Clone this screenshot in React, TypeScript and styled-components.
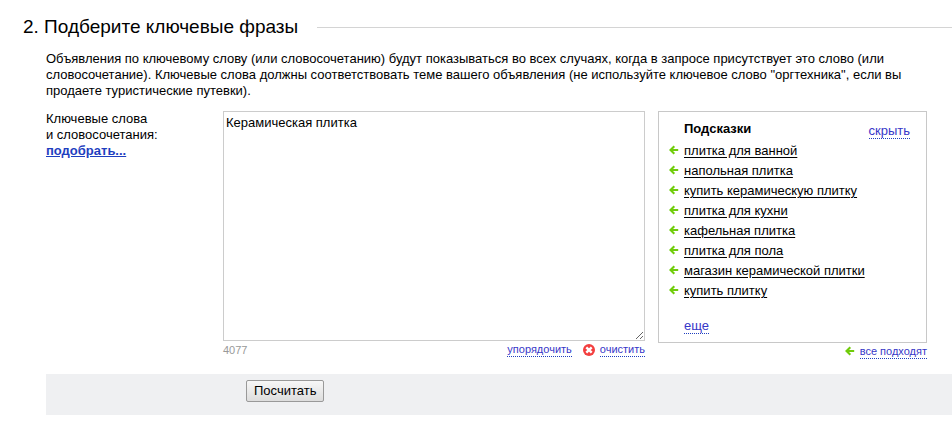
import React, { useState } from "react";
import styled, { createGlobalStyle } from "styled-components";

const GlobalStyle = createGlobalStyle`
  * {
    box-sizing: border-box;
  }
  body {
    margin: 0;
    background: #fff;
    color: #000;
    font: 13px/16px "Liberation Sans", Arial, sans-serif;
  }
`;

const Page = styled.main`
  padding: 16px 0 18px 23px;
`;

const Heading = styled.header`
  display: flex;
  align-items: center;
  gap: 19px;

  &::after {
    content: "";
    flex: 1;
    height: 1px;
    background: #d4d4d4;
  }
`;

const Title = styled.h1`
  margin: 0;
  font-size: 19px;
  line-height: 22px;
  font-weight: normal;
`;

const Section = styled.section`
  margin-left: 23px;
`;

const Intro = styled.p`
  margin: 13px 48px 0 0;
`;

const Form = styled.div`
  display: grid;
  grid-template-columns: 177px minmax(0, 1fr) 269px;
  align-items: start;
  margin: 12px 25px 0 0;
`;

const LabelColumn = styled.div`
  display: flex;
  flex-direction: column;
  align-items: flex-start;
`;

const PickLink = styled.a`
  color: #1f3fbf;
  font-weight: bold;
`;

const Editor = styled.div`
  margin-right: 13px;
`;

const Phrases = styled.textarea`
  display: block;
  width: 100%;
  height: 230px;
  margin: 0;
  padding: 3px 2px;
  border: 1px solid #ccc;
  border-radius: 0;
  outline: none;
  color: #000;
  font: inherit;
  resize: both;
`;

const Tools = styled.div`
  display: flex;
  align-items: flex-start;
  gap: 11px;
  padding-top: 2px;
  font-size: 11px;
  line-height: 13px;
`;

const Counter = styled.span`
  margin-right: auto;
  padding-top: 1px;
  color: #999;
`;

const DottedButton = styled.button<{ $small?: boolean }>`
  padding: 0;
  border: 0;
  border-bottom: 1px dotted #1f3fbf;
  background: none;
  color: #3737c8;
  font: inherit;
  font-size: ${(p) => (p.$small ? 11 : 13)}px;
  line-height: ${(p) => (p.$small ? 13 : 15)}px;
  cursor: pointer;
`;

const WithIcon = styled.span<{ $gap: number }>`
  display: flex;
  align-items: center;
  gap: ${(p) => p.$gap}px;
`;

const Panel = styled.aside`
  padding: 9px 16px 8px 10px;
  border: 1px solid #c8c8c8;
`;

const PanelHead = styled.div`
  display: flex;
  justify-content: space-between;
  align-items: flex-start;
  padding-left: 15px;
`;

const PanelTitle = styled.h2`
  margin: 0;
  font-size: 13px;
  line-height: 16px;
`;

const Hide = styled.div`
  display: flex;
  padding-top: 2px;
`;

const Hints = styled.ul`
  margin: 2px 0 0;
  padding: 0;
  list-style: none;
`;

const Hint = styled.li`
  display: flex;
  align-items: center;
  gap: 5px;
  height: 20px;
`;

const HintLink = styled.a`
  color: #000;
  line-height: 16px;
  text-underline-offset: 2px;
`;

const More = styled.div`
  display: flex;
  padding: 17px 0 0 15px;
`;

const PanelFoot = styled.div`
  display: flex;
  justify-content: flex-end;
  padding-top: 2px;
`;

const ActionBar = styled.footer`
  display: flex;
  margin-top: 15px;
  padding: 6px 0 13px 200px;
  background: #eff0f2;
`;

const Submit = styled.button`
  height: 22px;
  padding: 0 7px;
  border: 1px solid #999;
  border-radius: 2px;
  background: linear-gradient(#f7f7f7, #ddd);
  color: #000;
  font: inherit;
  cursor: pointer;
`;

const ArrowSvg = styled.svg`
  flex: none;
  width: 10px;
  height: 12px;
`;

const CrossSvg = styled.svg`
  flex: none;
  width: 12px;
  height: 12px;
`;

const Arrow = () => (
  <ArrowSvg viewBox="0 0 10 12" aria-hidden="true">
    <path d="M5.3 1.2 1.5 5 5.3 8.8M1.8 5H9.2" fill="none" stroke="#70cc0a" strokeWidth="2.1" />
  </ArrowSvg>
);

const Cross = () => (
  <CrossSvg viewBox="0 0 12 12" aria-hidden="true">
    <circle cx="6" cy="6" r="6" fill="#f33f3f" />
    <path d="M3.3 3.3 8.7 8.7M8.7 3.3 3.3 8.7" stroke="#fff" strokeWidth="2.4" />
  </CrossSvg>
);

const hints = [
  "плитка для ванной",
  "напольная плитка",
  "купить керамическую плитку",
  "плитка для кухни",
  "кафельная плитка",
  "плитка для пола",
  "магазин керамической плитки",
  "купить плитку",
];

const LIMIT = 4096;

export default function App() {
  const [text, setText] = useState("Керамическая плитка");

  const add = (phrases: string[]) =>
    setText((current) => [current, ...phrases].filter(Boolean).join("\n"));
  const sort = () => setText((current) => current.split("\n").sort().join("\n"));

  return (
    <>
      <GlobalStyle />
      <Page>
        <Heading>
          <Title>2. Подберите ключевые фразы</Title>
        </Heading>
        <Section>
          <Intro>
            Объявления по ключевому слову (или словосочетанию) будут показываться во всех
            случаях, когда в запросе присутствует это слово (или словосочетание). Ключевые
            слова должны соответствовать теме вашего объявления (не используйте ключевое
            слово "оргтехника", если вы продаете туристические путевки).
          </Intro>
          <Form>
            <LabelColumn>
              <label htmlFor="phrases">
                Ключевые слова
                <br />и словосочетания:
              </label>
              <PickLink href="#pick">подобрать...</PickLink>
            </LabelColumn>
            <Editor>
              <Phrases
                id="phrases"
                spellCheck={false}
                value={text}
                onChange={(e) => setText(e.target.value)}
              />
              <Tools>
                <Counter>{LIMIT - text.length}</Counter>
                <DottedButton $small type="button" onClick={sort}>
                  упорядочить
                </DottedButton>
                <WithIcon $gap={5}>
                  <Cross />
                  <DottedButton $small type="button" onClick={() => setText("")}>
                    очистить
                  </DottedButton>
                </WithIcon>
              </Tools>
            </Editor>
            <div>
              <Panel>
                <PanelHead>
                  <PanelTitle>Подсказки</PanelTitle>
                  <Hide>
                    <DottedButton type="button">скрыть</DottedButton>
                  </Hide>
                </PanelHead>
                <Hints>
                  {hints.map((hint) => (
                    <Hint key={hint}>
                      <Arrow />
                      <HintLink
                        href="#hint"
                        onClick={(e) => {
                          e.preventDefault();
                          add([hint]);
                        }}
                      >
                        {hint}
                      </HintLink>
                    </Hint>
                  ))}
                </Hints>
                <More>
                  <DottedButton type="button">еще</DottedButton>
                </More>
              </Panel>
              <PanelFoot>
                <WithIcon $gap={5}>
                  <Arrow />
                  <DottedButton $small type="button" onClick={() => add(hints)}>
                    все подходят
                  </DottedButton>
                </WithIcon>
              </PanelFoot>
            </div>
          </Form>
          <ActionBar>
            <Submit type="button">Посчитать</Submit>
          </ActionBar>
        </Section>
      </Page>
    </>
  );
}
